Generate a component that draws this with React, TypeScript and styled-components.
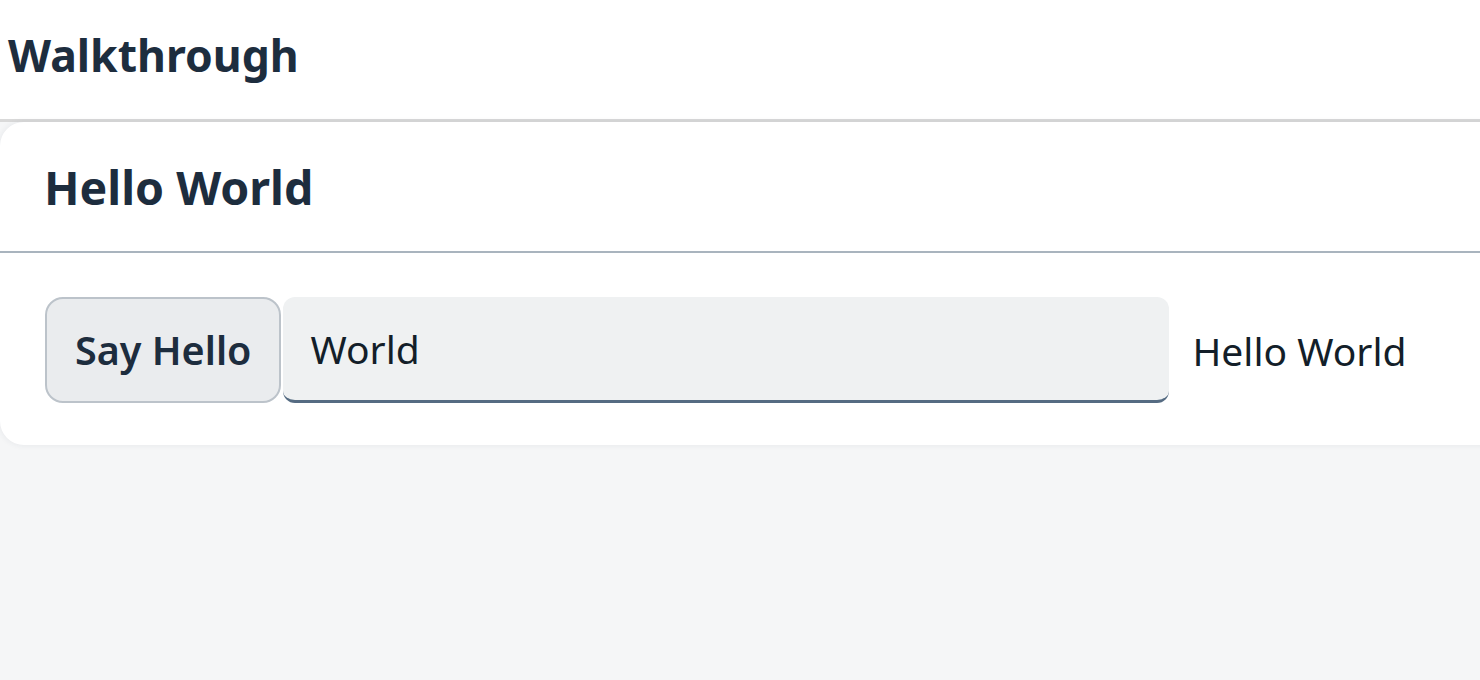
import React, { useState } from "react";
import styled, { createGlobalStyle } from "styled-components";

const GlobalStyle = createGlobalStyle`
  html, body { margin: 0; padding: 0; }
  body {
    background: #f5f6f7;
    font-family: "Noto Sans", "Open Sans", sans-serif;
    color: #1d2d3e;
  }
`;

const Page = styled.div`
  width: 1480px;
  height: 680px;
  overflow: hidden;
  background: #f5f6f7;
  display: flex;
  flex-direction: column;
`;

const Header = styled.header`
  height: 119px;
  flex: none;
  background: #ffffff;
  border-bottom: 3px solid #d9d9d9;
  display: flex;
  align-items: center;
  padding-left: 8px;
`;

const PageTitle = styled.h1`
  margin: 0;
  font-size: 44.5px;
  font-weight: 700;
  color: #1d2d3e;
  transform: translateY(-5px);
`;

const Card = styled.section`
  width: 1520px;
  background: #ffffff;
  border-radius: 24px;
  box-shadow: 0 0 6px rgba(34, 53, 72, 0.08);
  overflow: hidden;
  flex: none;
`;

const CardHeader = styled.div`
  height: 129px;
  display: flex;
  align-items: center;
  padding-left: 44px;
  border-bottom: 2px solid #a9b4be;
`;

const CardTitle = styled.h2`
  margin: 0;
  font-size: 46.5px;
  font-weight: 700;
  color: #1d2d3e;
`;

const CardBody = styled.div`
  display: flex;
  align-items: center;
  padding: 44px 45px 42px;
`;

const Button = styled.button`
  height: 106px;
  box-sizing: border-box;
  padding: 0 28px;
  background: #eaecee;
  border: 2px solid #bcc3ca;
  border-radius: 18px;
  font-family: "Noto Sans", "Open Sans", sans-serif;
  font-size: 39.5px;
  font-weight: 600;
  color: #1d2d3e;
  cursor: pointer;
`;

const Input = styled.input`
  margin-left: 2px;
  width: 886px;
  height: 106px;
  box-sizing: border-box;
  padding: 0 27px;
  background: #eff1f2;
  border: none;
  border-bottom: 3px solid #556b82;
  border-radius: 12px;
  font-family: "Noto Sans", "Open Sans", sans-serif;
  font-size: 39px;
  color: #131e29;
  outline: none;
`;

const Output = styled.span`
  margin-left: 23px;
  font-size: 39px;
  color: #131e29;
`;

export default function App() {
  const [name, setName] = useState("World");
  return (
    <>
      <GlobalStyle />
      <Page>
        <Header>
          <PageTitle>Walkthrough</PageTitle>
        </Header>
        <Card>
          <CardHeader>
            <CardTitle>Hello World</CardTitle>
          </CardHeader>
          <CardBody>
            <Button type="button">Say Hello</Button>
            <Input value={name} onChange={(e) => setName(e.target.value)} />
            <Output>Hello {name}</Output>
          </CardBody>
        </Card>
      </Page>
    </>
  );
}
